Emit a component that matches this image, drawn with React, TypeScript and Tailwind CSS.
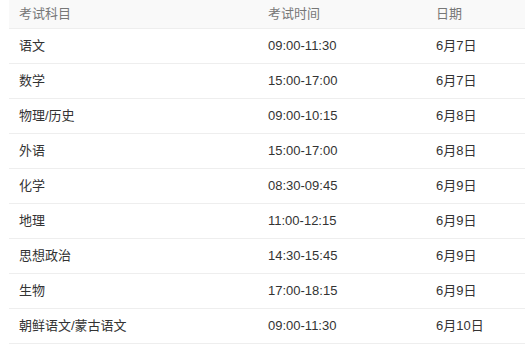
const rows = [
  ["语文", "09:00-11:30", "6月7日"],
  ["数学", "15:00-17:00", "6月7日"],
  ["物理/历史", "09:00-10:15", "6月8日"],
  ["外语", "15:00-17:00", "6月8日"],
  ["化学", "08:30-09:45", "6月9日"],
  ["地理", "11:00-12:15", "6月9日"],
  ["思想政治", "14:30-15:45", "6月9日"],
  ["生物", "17:00-18:15", "6月9日"],
  ["朝鲜语文/蒙古语文", "09:00-11:30", "6月10日"],
];

export default function App() {
  return (
    <div className="w-[525px] h-[351px] bg-white overflow-hidden pl-[9px] font-['Liberation_Sans','Noto_Sans_CJK_SC',sans-serif] text-[13px]">
      <table className="w-[520px] border-collapse table-fixed">
        <colgroup>
          <col className="w-[249px]" />
          <col className="w-[168px]" />
          <col />
        </colgroup>
        <thead>
          <tr className="bg-[#f9f9f9] text-[#777] border-b border-[#eeeeee]">
            <th className="h-[28px] pl-[10px] text-left font-normal">考试科目</th>
            <th className="h-[28px] pl-[10px] text-left font-normal">考试时间</th>
            <th className="h-[28px] pl-[10px] text-left font-normal">日期</th>
          </tr>
        </thead>
        <tbody className="text-[#333]">
          {rows.map((r, i) => (
            <tr key={i} className="border-b border-[#eeeeee]">
              <td className="h-[35px] pl-[10px]">{r[0]}</td>
              <td className="h-[35px] pl-[10px]">{r[1]}</td>
              <td className="h-[35px] pl-[10px]">{r[2]}</td>
            </tr>
          ))}
        </tbody>
      </table>
    </div>
  );
}
